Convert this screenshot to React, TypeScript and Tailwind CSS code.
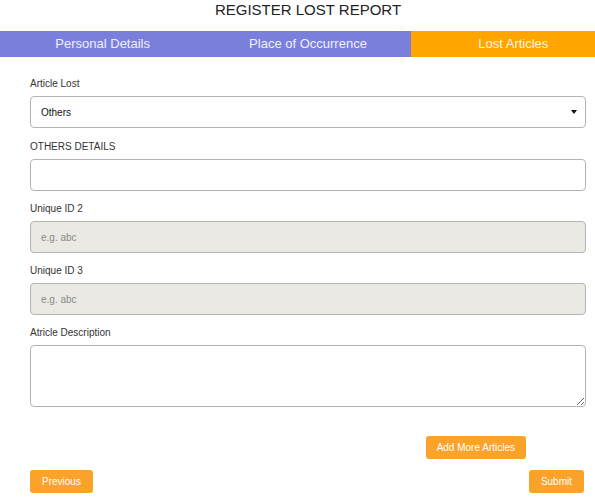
export default function App() {
  const tabs = [
    { label: "Personal Details", active: false },
    { label: "Place of Occurrence", active: false },
    { label: "Lost Articles", active: true },
  ]

  return (
    <div className="w-[595px] overflow-hidden bg-white font-['Liberation_Sans',Arial,sans-serif] text-[#333]">
      <div className="w-[616px]">
        <h1 className="text-center text-[15px] leading-[20px] text-[#222]">REGISTER LOST REPORT</h1>

        <div className="mt-[11px] grid grid-cols-3 bg-[#7b7fdc]">
          {tabs.map((tab) => (
            <div
              key={tab.label}
              className={`h-[26px] text-center text-[13px] leading-[26px] ${tab.active ? "bg-[#ffa500] text-[#fff5e6]" : "text-[#eef0ff]"}`}
            >
              {tab.label}
            </div>
          ))}
        </div>

        <form className="flex flex-col px-[30px] pt-[20px]">
          <Field label="Article Lost" className="mb-[12px]">
            <div className="flex h-[32px] items-center justify-between rounded-[4px] border border-[#b4b4b4] bg-white pl-[10px] pr-[8px] text-[10px] text-[#111]">
              <span>Others</span>
              <svg width="6" height="4" viewBox="0 0 6 4">
                <path d="M0 0h6L3 4z" fill="#111" />
              </svg>
            </div>
          </Field>

          <Field label="OTHERS DETAILS">
            <input className="h-[32px] w-full rounded-[4px] border border-[#b4b4b4] bg-white px-[10px] text-[10px] outline-none" />
          </Field>

          <Field label="Unique ID 2">
            <input
              placeholder="e.g. abc"
              className="h-[32px] w-full rounded-[4px] border border-[#b4b4b4] bg-[#eae9e3] px-[10px] text-[10px] outline-none placeholder:text-[#8a8a8a]"
            />
          </Field>

          <Field label="Unique ID 3">
            <input
              placeholder="e.g. abc"
              className="h-[32px] w-full rounded-[4px] border border-[#b4b4b4] bg-[#eae9e3] px-[10px] text-[10px] outline-none placeholder:text-[#8a8a8a]"
            />
          </Field>

          <Field label="Atricle Description">
            <textarea className="block h-[62px] w-full rounded-[4px] border border-[#b4b4b4] bg-white px-[10px] py-[6px] text-[10px] outline-none" />
          </Field>

          <div className="mt-[18px] flex justify-end pr-[60px]">
            <button type="button" className="h-[23px] rounded-[3px] bg-[#fba22b] px-[11px] text-[10px] text-white">
              Add More Articles
            </button>
          </div>

          <div className="mt-[11px] flex justify-between">
            <button type="button" className="h-[23px] rounded-[3px] bg-[#fba22b] px-[12px] text-[10px] text-white">
              Previous
            </button>
            <button type="button" className="mr-[2px] h-[23px] rounded-[3px] bg-[#fba22b] px-[12px] text-[10px] text-white">
              Submit
            </button>
          </div>
        </form>
      </div>
    </div>
  )
}

function Field({
  label,
  className = "mb-[11px]",
  children,
}: {
  label: string
  className?: string
  children: React.ReactNode
}) {
  return (
    <div className={`flex flex-col ${className}`}>
      <label className="mb-[5px] text-[10px] leading-[14px] text-[#333]">{label}</label>
      {children}
    </div>
  )
}
